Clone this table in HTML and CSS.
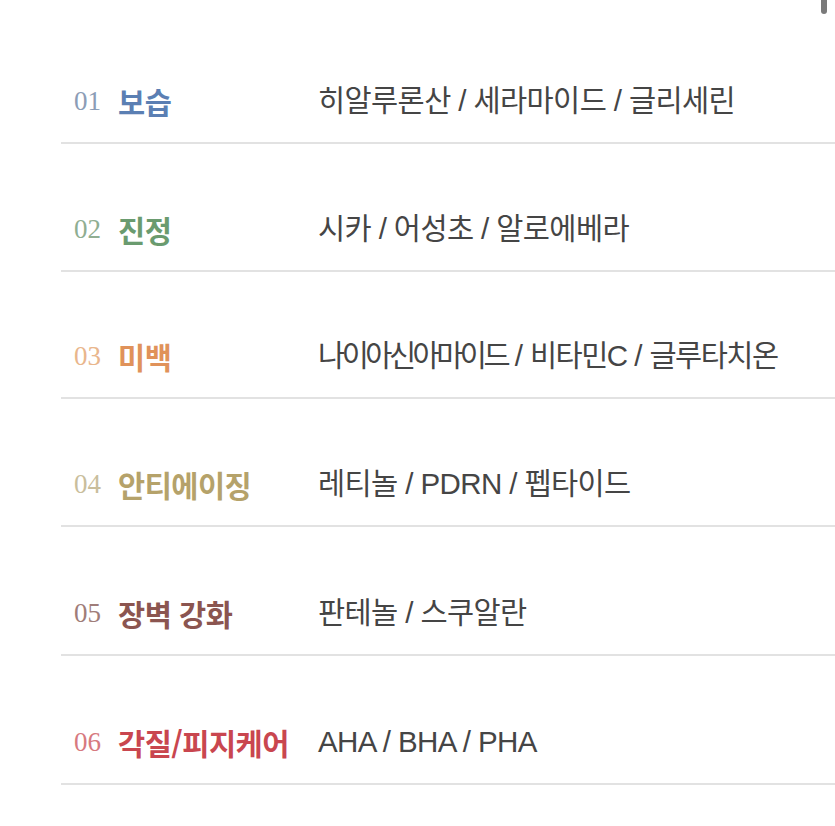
FILE: index.html
```html
<!DOCTYPE html>
<html lang="ko">
<head>
<meta charset="utf-8">
<link rel="stylesheet" href="styles.css">
</head>
<body>
<div class="scrollbar"></div>
<ul class="list">
  <li class="row c1"><span class="num">01</span><span class="cat">보습</span><span class="ing">히알루론산 / 세라마이드 / 글리세린</span></li>
  <li class="row c2"><span class="num">02</span><span class="cat">진정</span><span class="ing">시카 / 어성초 / 알로에베라</span></li>
  <li class="row c3"><span class="num">03</span><span class="cat">미백</span><span class="ing"><span class="tight">나이아신아마이드</span> / <span class="tight2">비타민C</span> / <span class="tight2">글루타치온</span></span></li>
  <li class="row c4"><span class="num">04</span><span class="cat">안티에이징</span><span class="ing">레티놀 / PDRN / 펩타이드</span></li>
  <li class="row c5"><span class="num">05</span><span class="cat">장벽 강화</span><span class="ing">판테놀 / 스쿠알란</span></li>
  <li class="row c6"><span class="num">06</span><span class="cat">각질/피지케어</span><span class="ing">AHA / BHA / PHA</span></li>
</ul>
</body>
</html>
```
FILE: styles.css
```css
html, body {
  margin: 0;
  padding: 0;
  background: #ffffff;
}
body {
  width: 835px;
  height: 826px;
  overflow: hidden;
  position: relative;
}
.scrollbar {
  position: absolute;
  top: 0;
  left: 821px;
  width: 6px;
  height: 14px;
  background: #7a7a7a;
  border-radius: 0 0 3px 3px;
}
.list {
  list-style: none;
  margin: 0;
  padding: 16px 0 0 61px;
}
.row {
  display: grid;
  grid-template-columns: 44px 200px 1fr;
  align-items: center;
  height: 40px;
  padding: 65px 0 21px 13px;
  border-bottom: 2px solid #e2e2e2;
}
.row.c3 { padding-top: 64px; }
.row.c5, .row.c6 { padding-top: 66px; }
.num {
  font-family: "Liberation Serif", serif;
  font-size: 27px;
  line-height: 40px;
}
.cat {
  font-family: "Noto Sans CJK KR", sans-serif;
  font-weight: 700;
  font-size: 29.5px;
  letter-spacing: -0.5px;
  line-height: 40px;
}
.ing {
  font-family: "Liberation Sans", "Noto Sans CJK KR", sans-serif;
  font-size: 29.5px;
  letter-spacing: -0.6px;
  line-height: 40px;
  color: #454545;
}
.tight { letter-spacing: -3.5px; }
.tight2 { letter-spacing: -1.5px; }
.c1 .num { color: #8c9db6; }
.c1 .cat { color: #5b7fb3; }
.c2 .num { color: #8fae92; }
.c2 .cat { color: #6a9b6f; }
.c3 .num { color: #e9b68c; }
.c3 .cat { color: #e0925a; }
.c4 .num { color: #c9be9c; }
.c4 .cat { color: #b5a26a; }
.c5 .num { color: #9f7d79; }
.c5 .cat { color: #8b5550; }
.c6 .num { color: #d77a7f; }
.c6 .cat { color: #c9464f; }
```
